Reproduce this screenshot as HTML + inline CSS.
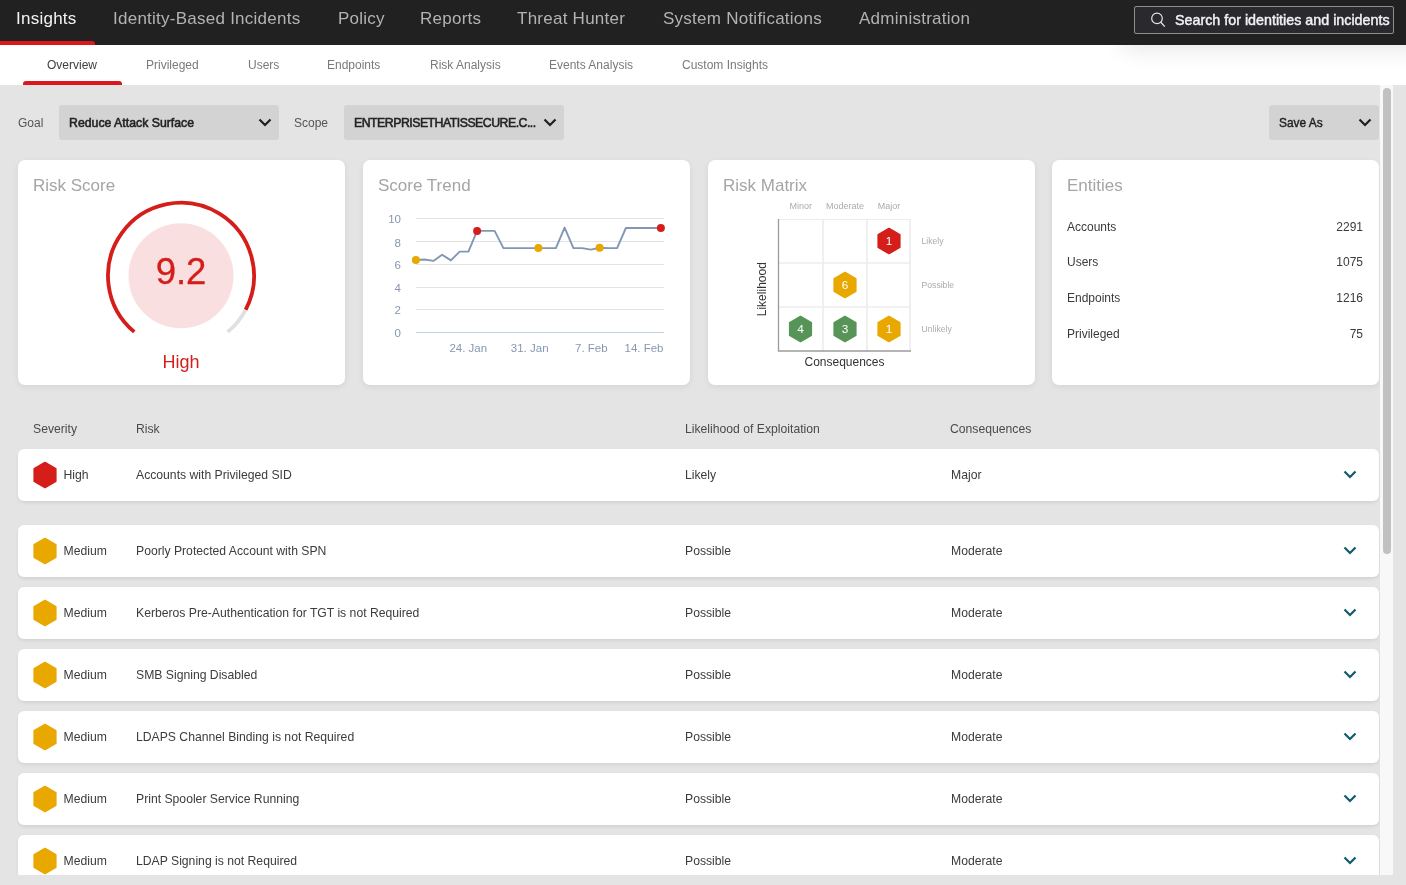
<!DOCTYPE html>
<html><head><meta charset="utf-8">
<style>
*{margin:0;padding:0;box-sizing:border-box}
html{filter:grayscale(0.001)}
html,body{width:1406px;height:885px;overflow:hidden;background:#e4e4e4;font-family:"Liberation Sans",sans-serif;color:#3a3a3a}
.abs{position:absolute}
#nav{position:absolute;left:0;top:0;width:1406px;height:45px;background:#212121;z-index:3}
#nav .t{position:absolute;top:9px;font-size:17px;line-height:20px;color:#b3b3b3;letter-spacing:0.25px;white-space:nowrap}
#nav .t.on{color:#f4f4f4}
#nav .ul{position:absolute;left:0;top:41px;width:95px;height:4px;background:#dc161d;border-radius:0 3px 0 0}
#search{position:absolute;left:1134px;top:6px;width:260px;height:28px;border:1px solid #8d8d92;background:#2a292e;border-radius:2px}
#search .st{position:absolute;left:40px;top:5px;font-size:14.3px;line-height:16px;color:#f2f2f2;-webkit-text-stroke:0.45px #f2f2f2;white-space:nowrap}
#sub{position:absolute;left:0;top:45px;width:1406px;height:40px;background:#fff;z-index:1;overflow:hidden}
#sub .t{position:absolute;top:13px;font-size:12px;line-height:14px;color:#7a7a7a;white-space:nowrap}
#sub .t.on{color:#404040}
#sub .ul{position:absolute;left:23px;top:36px;width:99px;height:4px;background:#dc161d;border-radius:3px 3px 0 0}
#shadow{position:absolute;left:1118px;top:-40px;width:320px;height:40px;box-shadow:0 6px 22px rgba(0,0,0,0.09);border-radius:20px}
#main{position:absolute;left:0;top:85px;width:1380px;height:790px;overflow:hidden}
#track{position:absolute;left:1380px;top:85px;width:13px;height:790px;background:#f8f8f8}
#thumb{position:absolute;left:3px;top:3px;width:8px;height:466px;background:#c1c1c1;border-radius:4px}
.lbl{position:absolute;font-size:12px;line-height:14px;color:#555;white-space:nowrap}
.dd{position:absolute;top:105px;height:35px;background:#d3d3d3;border-radius:3px}
.dd .v{position:absolute;left:10px;top:11px;font-size:12.3px;line-height:14px;color:#232323;-webkit-text-stroke:0.55px #232323;white-space:nowrap}
.chev{position:absolute}
.card{position:absolute;top:160px;width:327px;height:225px;background:#fff;border-radius:7px;box-shadow:0 2px 6px rgba(0,0,0,0.07)}
.card .title{position:absolute;left:15px;top:16px;font-size:17px;line-height:20px;color:#a5a5a5;white-space:nowrap}
.row{position:absolute;left:18px;width:1361px;height:52px;background:#fff;border-radius:6px;box-shadow:0 2px 4px -1px rgba(0,0,0,0.11)}
.row .c{position:absolute;top:19px;font-size:12.2px;line-height:14px;color:#3c3c3c;white-space:nowrap}
.hdr{position:absolute;top:422px;font-size:12.2px;line-height:14px;color:#4a4a4a;white-space:nowrap}
.pg{position:absolute;left:0;top:-85px;width:1406px;height:960px}
.ent{position:absolute;margin-top:1px;left:1067px;font-size:12px;line-height:14px;color:#3a3a3a}
.entv{position:absolute;margin-top:1px;right:43px;font-size:12px;line-height:14px;color:#3a3a3a}
</style></head>
<body>
<div id="nav">
  <div class="t on" style="left:16px">Insights</div>
  <div class="t" style="left:113px">Identity-Based Incidents</div>
  <div class="t" style="left:338px">Policy</div>
  <div class="t" style="left:420px">Reports</div>
  <div class="t" style="left:517px">Threat Hunter</div>
  <div class="t" style="left:663px">System Notifications</div>
  <div class="t" style="left:859px">Administration</div>
  <div class="ul"></div>
  <div id="search">
    <svg class="abs" style="left:14px;top:5px" width="18" height="18" viewBox="0 0 18 18"><circle cx="8" cy="6.4" r="5.3" fill="none" stroke="#e6e6e6" stroke-width="1.2"/><line x1="11.8" y1="10.2" x2="15.8" y2="14.6" stroke="#e6e6e6" stroke-width="1.3"/></svg>
    <div class="st">Search for identities and incidents</div>
  </div>
</div>
<div id="sub">
  <div id="shadow"></div>
  <div class="t on" style="left:47px">Overview</div>
  <div class="t" style="left:146px">Privileged</div>
  <div class="t" style="left:248px">Users</div>
  <div class="t" style="left:327px">Endpoints</div>
  <div class="t" style="left:430px">Risk Analysis</div>
  <div class="t" style="left:549px">Events Analysis</div>
  <div class="t" style="left:682px">Custom Insights</div>
  <div class="ul"></div>
</div>
<div id="main"><div class="pg">
  <svg width="0" height="0" style="position:absolute"><defs>
    <polygon id="hx" points="0,-12.4 10.7,-6.2 10.7,6.2 0,12.4 -10.7,6.2 -10.7,-6.2" stroke-width="1.8" stroke-linejoin="round"/>
    <polyline id="cv" points="-5.5,-3 0,2.5 5.5,-3" fill="none" stroke-width="2.2"/>
  </defs></svg>
  <!-- filter bar -->
  <div class="lbl" style="left:18px;top:116px">Goal</div>
  <div class="dd" style="left:59px;width:220px"><div class="v">Reduce Attack Surface</div>
    <svg class="chev" style="left:199px;top:13px" width="14" height="9" viewBox="0 0 14 9"><polyline points="1.5,1.5 7,7 12.5,1.5" fill="none" stroke="#1e1e1e" stroke-width="2.2"/></svg></div>
  <div class="lbl" style="left:294px;top:116px">Scope</div>
  <div class="dd" style="left:344px;width:220px"><div class="v" style="letter-spacing:-0.5px">ENTERPRISETHATISSECURE.C...</div>
    <svg class="chev" style="left:199px;top:13px" width="14" height="9" viewBox="0 0 14 9"><polyline points="1.5,1.5 7,7 12.5,1.5" fill="none" stroke="#1e1e1e" stroke-width="2.2"/></svg></div>
  <div class="dd" style="left:1269px;width:110px"><div class="v" style="font-size:11.9px;-webkit-text-stroke:0.4px #232323">Save As</div>
    <svg class="chev" style="left:89px;top:13px" width="14" height="9" viewBox="0 0 14 9"><polyline points="1.5,1.5 7,7 12.5,1.5" fill="none" stroke="#1e1e1e" stroke-width="2.2"/></svg></div>

  <!-- CARDS -->
  <div class="card" style="left:18px"><div class="title">Risk Score</div></div>
  <div class="card" style="left:363px"><div class="title">Score Trend</div></div>
  <div class="card" style="left:708px"><div class="title">Risk Matrix</div></div>
  <div class="card" style="left:1052px"><div class="title">Entities</div></div>

  <!-- gauge + chart + matrix overlay svg in page coords -->
  <svg class="abs" style="left:0;top:0" width="1406" height="400" viewBox="0 0 1406 400">
    <!-- gauge -->
    <circle cx="181" cy="275.8" r="52.5" fill="#f9dfe0"/>
    <path d="M134.3,331.9 A73,73 0 1 1 245.6,309.8" fill="none" stroke="#d51d1a" stroke-width="3.8"/>
    <path d="M245.6,309.8 A73,73 0 0 1 227.7,331.9" fill="none" stroke="#e0e0e0" stroke-width="3.8"/>
    <!-- trend grid -->
    <g stroke="#e3e3e3" stroke-width="1">
      <line x1="416" y1="218.5" x2="664" y2="218.5"/>
      <line x1="416" y1="241.5" x2="664" y2="241.5"/>
      <line x1="416" y1="264.5" x2="664" y2="264.5"/>
      <line x1="416" y1="287.5" x2="664" y2="287.5"/>
      <line x1="416" y1="309.5" x2="664" y2="309.5"/>
    </g>
    <line x1="416" y1="332.5" x2="664" y2="332.5" stroke="#c4cfdf" stroke-width="1"/>
    <g style="font-family:&quot;Liberation Sans&quot;,sans-serif" font-size="11.5" fill="#8797b3" text-anchor="end">
      <text x="401" y="223">10</text><text x="401" y="247">8</text><text x="401" y="269">6</text>
      <text x="401" y="292">4</text><text x="401" y="314">2</text><text x="401" y="337">0</text>
    </g>
    <g style="font-family:&quot;Liberation Sans&quot;,sans-serif" font-size="11.5" fill="#8797b3" text-anchor="middle">
      <text x="468.3" y="352">24. Jan</text><text x="529.7" y="352">31. Jan</text>
      <text x="591.3" y="352">7. Feb</text><text x="644" y="352">14. Feb</text>
    </g>
    <polyline fill="none" stroke="#8397b5" stroke-width="1.9" stroke-linejoin="round" points="415.9,260.0 424.6,259.5 433.4,260.9 442.1,254.7 450.9,260.4 459.6,251.6 468.4,251.6 477.1,230.9 485.9,230.9 494.6,230.9 503.4,248.1 512.1,248.1 520.9,248.1 529.6,248.1 538.4,248.1 547.1,248.1 555.9,248.1 564.6,227.6 573.4,248.1 582.1,248.1 590.9,249.6 599.6,247.8 608.4,248.1 617.1,248.1 625.9,228.0 634.6,228.0 643.4,228.0 652.1,228.0 660.9,228.0"/>
    <circle cx="415.9" cy="260" r="4" fill="#e9a800"/>
    <circle cx="477.1" cy="230.9" r="4" fill="#d51d1a"/>
    <circle cx="538.4" cy="248.1" r="4" fill="#e9a800"/>
    <circle cx="599.6" cy="247.8" r="4" fill="#e9a800"/>
    <circle cx="660.9" cy="228" r="4" fill="#d51d1a"/>
    <!-- matrix -->
    <g stroke="#ececec" stroke-width="1.6">
      <line x1="823" y1="219" x2="823" y2="351"/><line x1="867" y1="219" x2="867" y2="351"/>
      <line x1="910" y1="219" x2="910" y2="351"/>
      <line x1="778" y1="263" x2="910" y2="263"/><line x1="778" y1="307" x2="910" y2="307"/>
    </g>
    <line x1="778" y1="219.5" x2="910.8" y2="219.5" stroke="#ececec" stroke-width="1"/>
    <polyline points="778.5,219 778.5,351 911,351" fill="none" stroke="#9c9c9c" stroke-width="1.3"/>
    <g style="font-family:&quot;Liberation Sans&quot;,sans-serif" font-size="9" fill="#ababab" text-anchor="middle">
      <text x="800.7" y="209">Minor</text><text x="845" y="209">Moderate</text><text x="889" y="209">Major</text>
    </g>
    <g style="font-family:&quot;Liberation Sans&quot;,sans-serif" font-size="8.6" fill="#ababab">
      <text x="921.6" y="244">Likely</text><text x="921.6" y="288">Possible</text><text x="921.6" y="332">Unlikely</text>
    </g>
    <text x="844.5" y="366" style="font-family:&quot;Liberation Sans&quot;,sans-serif" font-size="12" fill="#333" text-anchor="middle">Consequences</text>
    <text transform="translate(766,289.2) rotate(-90)" style="font-family:&quot;Liberation Sans&quot;,sans-serif" font-size="12" fill="#333" text-anchor="middle">Likelihood</text>
    <g transform="translate(889,241)" fill="#d51d1a" stroke="#d51d1a"><use href="#hx"/></g>
    <g transform="translate(845,285)" fill="#e9a800" stroke="#e9a800"><use href="#hx"/></g>
    <g transform="translate(800.5,329)" fill="#579457" stroke="#579457"><use href="#hx"/></g>
    <g transform="translate(845,329)" fill="#579457" stroke="#579457"><use href="#hx"/></g>
    <g transform="translate(889,329)" fill="#e9a800" stroke="#e9a800"><use href="#hx"/></g>
    <g style="font-family:&quot;Liberation Sans&quot;,sans-serif" font-size="11.8" fill="#fff" text-anchor="middle">
      <text x="889" y="245">1</text><text x="845" y="289">6</text><text x="800.5" y="333">4</text>
      <text x="845" y="333">3</text><text x="889" y="333">1</text>
    </g>
  </svg>
  <div class="abs" style="left:131px;top:252px;width:100px;text-align:center;font-size:36.5px;line-height:40px;color:#d51d1a;-webkit-text-stroke:0.3px #d51d1a;white-space:nowrap">9.2</div>
  <div class="abs" style="left:131px;top:352px;width:100px;text-align:center;font-size:18px;line-height:20px;color:#d51d1a">High</div>

  <!-- entities -->
  <div class="ent" style="top:219px">Accounts</div><div class="entv" style="top:219px">2291</div>
  <div class="ent" style="top:254px">Users</div><div class="entv" style="top:254px">1075</div>
  <div class="ent" style="top:290px">Endpoints</div><div class="entv" style="top:290px">1216</div>
  <div class="ent" style="top:326px">Privileged</div><div class="entv" style="top:326px">75</div>

  <!-- TABLE HEADER -->
  <div class="hdr" style="left:33px">Severity</div>
  <div class="hdr" style="left:136px">Risk</div>
  <div class="hdr" style="left:685px">Likelihood of Exploitation</div>
  <div class="hdr" style="left:950px">Consequences</div>
  <div class="row" style="top:449px">
    <svg class="abs" style="left:0;top:0" width="1361" height="52"><g transform="translate(27,26)" fill="#d51d1a" stroke="#d51d1a"><use href="#hx"/></g><g transform="translate(1332,25.5)" stroke="#0f5a6c"><use href="#cv"/></g></svg>
    <div class="c" style="left:45.5px">High</div><div class="c" style="left:118px">Accounts with Privileged SID</div><div class="c" style="left:667px">Likely</div><div class="c" style="left:933px">Major</div>
  </div>
  <div class="row" style="top:525px">
    <svg class="abs" style="left:0;top:0" width="1361" height="52"><g transform="translate(27,26)" fill="#e9a800" stroke="#e9a800"><use href="#hx"/></g><g transform="translate(1332,25.5)" stroke="#0f5a6c"><use href="#cv"/></g></svg>
    <div class="c" style="left:45.5px">Medium</div><div class="c" style="left:118px">Poorly Protected Account with SPN</div><div class="c" style="left:667px">Possible</div><div class="c" style="left:933px">Moderate</div>
  </div>
  <div class="row" style="top:587px">
    <svg class="abs" style="left:0;top:0" width="1361" height="52"><g transform="translate(27,26)" fill="#e9a800" stroke="#e9a800"><use href="#hx"/></g><g transform="translate(1332,25.5)" stroke="#0f5a6c"><use href="#cv"/></g></svg>
    <div class="c" style="left:45.5px">Medium</div><div class="c" style="left:118px">Kerberos Pre-Authentication for TGT is not Required</div><div class="c" style="left:667px">Possible</div><div class="c" style="left:933px">Moderate</div>
  </div>
  <div class="row" style="top:649px">
    <svg class="abs" style="left:0;top:0" width="1361" height="52"><g transform="translate(27,26)" fill="#e9a800" stroke="#e9a800"><use href="#hx"/></g><g transform="translate(1332,25.5)" stroke="#0f5a6c"><use href="#cv"/></g></svg>
    <div class="c" style="left:45.5px">Medium</div><div class="c" style="left:118px">SMB Signing Disabled</div><div class="c" style="left:667px">Possible</div><div class="c" style="left:933px">Moderate</div>
  </div>
  <div class="row" style="top:711px">
    <svg class="abs" style="left:0;top:0" width="1361" height="52"><g transform="translate(27,26)" fill="#e9a800" stroke="#e9a800"><use href="#hx"/></g><g transform="translate(1332,25.5)" stroke="#0f5a6c"><use href="#cv"/></g></svg>
    <div class="c" style="left:45.5px">Medium</div><div class="c" style="left:118px">LDAPS Channel Binding is not Required</div><div class="c" style="left:667px">Possible</div><div class="c" style="left:933px">Moderate</div>
  </div>
  <div class="row" style="top:773px">
    <svg class="abs" style="left:0;top:0" width="1361" height="52"><g transform="translate(27,26)" fill="#e9a800" stroke="#e9a800"><use href="#hx"/></g><g transform="translate(1332,25.5)" stroke="#0f5a6c"><use href="#cv"/></g></svg>
    <div class="c" style="left:45.5px">Medium</div><div class="c" style="left:118px">Print Spooler Service Running</div><div class="c" style="left:667px">Possible</div><div class="c" style="left:933px">Moderate</div>
  </div>
  <div class="row" style="top:835px">
    <svg class="abs" style="left:0;top:0" width="1361" height="52"><g transform="translate(27,26)" fill="#e9a800" stroke="#e9a800"><use href="#hx"/></g><g transform="translate(1332,25.5)" stroke="#0f5a6c"><use href="#cv"/></g></svg>
    <div class="c" style="left:45.5px">Medium</div><div class="c" style="left:118px">LDAP Signing is not Required</div><div class="c" style="left:667px">Possible</div><div class="c" style="left:933px">Moderate</div>
  </div>

</div></div>
<div id="track"><div id="thumb"></div></div>
</body></html>
